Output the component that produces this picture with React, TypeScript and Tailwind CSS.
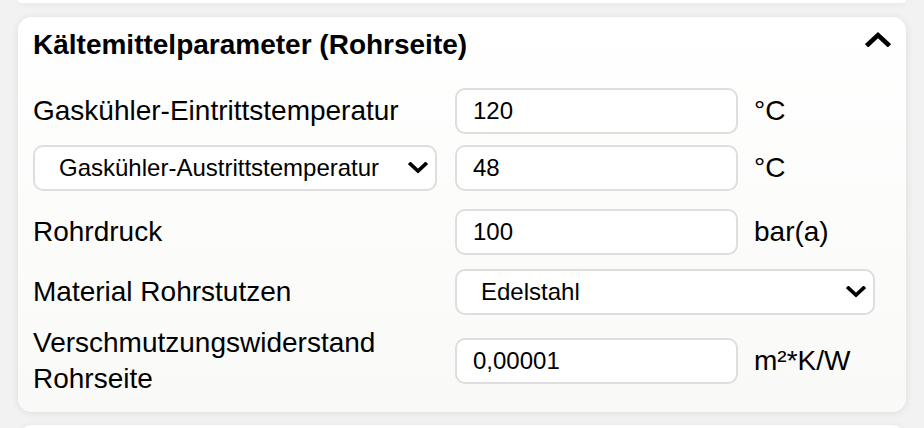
import React from "react";

const font = { fontFamily: '"Liberation Sans", Arial, sans-serif' };

function Chevron({ up, className }: { up?: boolean; className?: string }) {
  return (
    <svg viewBox="0 0 20 12" className={className} fill="none">
      <path
        d={up ? "M2.5 10 L10 3 L17.5 10" : "M2.5 2 L10 9 L17.5 2"}
        stroke="#000"
        strokeWidth="3.6"
        strokeLinecap="square"
      />
    </svg>
  );
}

function TextInput({ value }: { value: string }) {
  return (
    <input
      defaultValue={value}
      className="h-[46px] w-[283px] rounded-[10px] border-2 border-[#dedede] bg-white pl-[16px] text-[24px] text-black outline-none"
      style={font}
    />
  );
}

function SelectBox({ value, width }: { value: string; width: string }) {
  return (
    <div
      className={`relative flex h-[46px] items-center rounded-[10px] border-2 border-[#dedede] bg-white pl-[24px] text-[24px] text-black ${width}`}
    >
      <span>{value}</span>
      <Chevron className="absolute right-[7px] top-1/2 h-[12px] w-[20px] -translate-y-1/2" />
    </div>
  );
}

export default function App() {
  return (
    <div className="h-[428px] w-[924px] overflow-hidden bg-[#f2f2f2] px-[18px]" style={font}>
      <div className="h-[3px] rounded-b-[14px] bg-white shadow-[0_1px_6px_rgba(0,0,0,0.08)]" />

      <div className="mt-[14px] rounded-[14px] bg-gradient-to-b from-white to-[#f9f9f7] px-[15px] pb-[15px] pt-[10px] shadow-[0_1px_8px_rgba(0,0,0,0.09)]">
        <div className="flex justify-between">
          <h2 className="text-[28px] font-bold leading-[36px] text-black">
            Kältemittelparameter (Rohrseite)
          </h2>
          <Chevron up className="mt-[4px] h-[16px] w-[26px]" />
        </div>

        <div className="mt-[25px] grid h-[46px] grid-cols-[406px_283px_1fr] items-center gap-x-[16px] text-[28px] leading-[36px] text-black">
          <span>Gaskühler-Eintrittstemperatur</span>
          <TextInput value="120" />
          <span>°C</span>
        </div>

        <div className="mt-[11px] grid h-[46px] grid-cols-[406px_283px_1fr] items-center gap-x-[16px] text-[28px] leading-[36px] text-black">
          <SelectBox value="Gaskühler-Austrittstemperatur" width="w-[404px]" />
          <TextInput value="48" />
          <span>°C</span>
        </div>

        <div className="mt-[18px] grid h-[46px] grid-cols-[406px_283px_1fr] items-center gap-x-[16px] text-[28px] leading-[36px] text-black">
          <span>Rohrdruck</span>
          <TextInput value="100" />
          <span>bar(a)</span>
        </div>

        <div className="mt-[14px] grid h-[46px] grid-cols-[406px_283px_1fr] items-center gap-x-[16px] text-[28px] leading-[36px] text-black">
          <span>Material Rohrstutzen</span>
          <div className="col-span-2">
            <SelectBox value="Edelstahl" width="w-[420px]" />
          </div>
        </div>

        <div className="mt-[10px] grid grid-cols-[406px_283px_1fr] items-center gap-x-[16px] text-[28px] leading-[36px] text-black">
          <span>Verschmutzungswiderstand Rohrseite</span>
          <TextInput value="0,00001" />
          <span>m²*K/W</span>
        </div>
      </div>

      <div className="mt-[13px] h-[20px] rounded-t-[14px] bg-white shadow-[0_1px_6px_rgba(0,0,0,0.08)]" />
    </div>
  );
}
